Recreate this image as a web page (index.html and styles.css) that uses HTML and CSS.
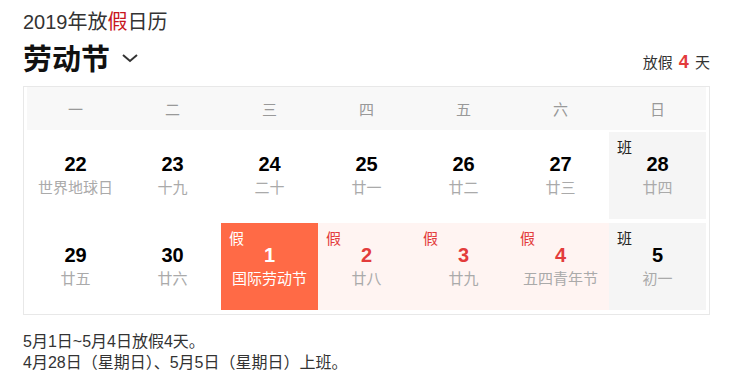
FILE: index.html
```html
<!DOCTYPE html>
<html lang="zh-CN">
<head>
<meta charset="utf-8">
<title>2019年放假日历</title>
<link rel="stylesheet" href="styles.css">
</head>
<body>
<div class="wrap">
  <div class="year">2019年放<span class="red">假</span>日历</div>
  <div class="head-row">
    <div class="festival">劳动节
      <svg class="chev" width="18" height="10" viewBox="0 0 18 10"><polyline points="2,2 9,8 16,2" fill="none" stroke="#333" stroke-width="2"/></svg>
    </div>
    <div class="days-off">放假 <b>4</b> 天</div>
  </div>
  <div class="cal">
    <div class="week">
      <div>一</div><div>二</div><div>三</div><div>四</div><div>五</div><div>六</div><div>日</div>
    </div>
    <div class="days">
      <div class="cell"><div class="num">22</div><div class="lunar">世界地球日</div></div>
      <div class="cell"><div class="num">23</div><div class="lunar">十九</div></div>
      <div class="cell"><div class="num">24</div><div class="lunar">二十</div></div>
      <div class="cell"><div class="num">25</div><div class="lunar">廿一</div></div>
      <div class="cell"><div class="num">26</div><div class="lunar">廿二</div></div>
      <div class="cell"><div class="num">27</div><div class="lunar">廿三</div></div>
      <div class="cell work"><span class="tag">班</span><div class="num">28</div><div class="lunar">廿四</div></div>
      <div class="cell"><div class="num">29</div><div class="lunar">廿五</div></div>
      <div class="cell"><div class="num">30</div><div class="lunar">廿六</div></div>
      <div class="cell main"><span class="tag">假</span><div class="num">1</div><div class="lunar">国际劳动节</div></div>
      <div class="cell rest"><span class="tag">假</span><div class="num">2</div><div class="lunar">廿八</div></div>
      <div class="cell rest"><span class="tag">假</span><div class="num">3</div><div class="lunar">廿九</div></div>
      <div class="cell rest"><span class="tag">假</span><div class="num">4</div><div class="lunar">五四青年节</div></div>
      <div class="cell work"><span class="tag">班</span><div class="num">5</div><div class="lunar">初一</div></div>
    </div>
  </div>
  <div class="notes">
    <p>5月1日~5月4日放假4天。</p>
    <p>4月28日（星期日）、5月5日（星期日）上班。</p>
  </div>
</div>
</body>
</html>
```
FILE: styles.css
```css
* { box-sizing: border-box; }
body {
  margin: 0;
  background: #fff;
  font-family: "Liberation Sans", "Noto Sans CJK SC", sans-serif;
  color: #333;
}
.wrap {
  width: 687px;
  margin-left: 23px;
  padding-top: 8px;
}
.year {
  font-size: 20px;
  line-height: 28px;
  color: #333;
}
.red { color: #c8161d; }
.head-row {
  display: flex;
  justify-content: space-between;
  align-items: center;
  height: 42px;
}
.festival {
  font-size: 29px;
  font-weight: bold;
  color: #111;
  display: flex;
  align-items: center;
  gap: 11px;
}
.chev { margin-top: 2px; }
.days-off {
  font-size: 15px;
  color: #333;
  padding-top: 10px;
}
.days-off b {
  color: #e33c3c;
  font-size: 18px;
  margin: 0 2px;
}
.cal {
  margin-top: 8px;
  border: 1px solid #e8e8e8;
  padding: 0 3px 4px;
}
.week {
  display: grid;
  grid-template-columns: repeat(7, 97px);
  height: 43px;
  background: #f8f8f8;
}
.week div {
  display: flex;
  align-items: center;
  justify-content: center;
  font-size: 15px;
  color: #999;
}
.days {
  display: grid;
  grid-template-columns: repeat(7, 97px);
  grid-auto-rows: 87px;
  row-gap: 4px;
  margin-top: 2px;
}
.cell {
  position: relative;
  display: flex;
  flex-direction: column;
  align-items: center;
  justify-content: center;
  background: #fff;
}
.num {
  font-size: 20px;
  font-weight: bold;
  line-height: 24px;
  color: #000;
}
.lunar {
  font-size: 15px;
  line-height: 22px;
  color: #aaa;
  margin-top: 1px;
}
.tag {
  position: absolute;
  left: 8px;
  top: 6px;
  font-size: 15px;
  line-height: 20px;
  color: #222;
}
.work { background: #f5f5f5; }
.rest { background: #fff4f2; }
.rest .num, .rest .tag { color: #e33c3c; }
.main { background: #ff6a46; }
.main .num, .main .tag, .main .lunar { color: #fff; }
.notes {
  margin-top: 16px;
  font-size: 16px;
  line-height: 21px;
  color: #333;
}
.notes p { margin: 0; }
```
